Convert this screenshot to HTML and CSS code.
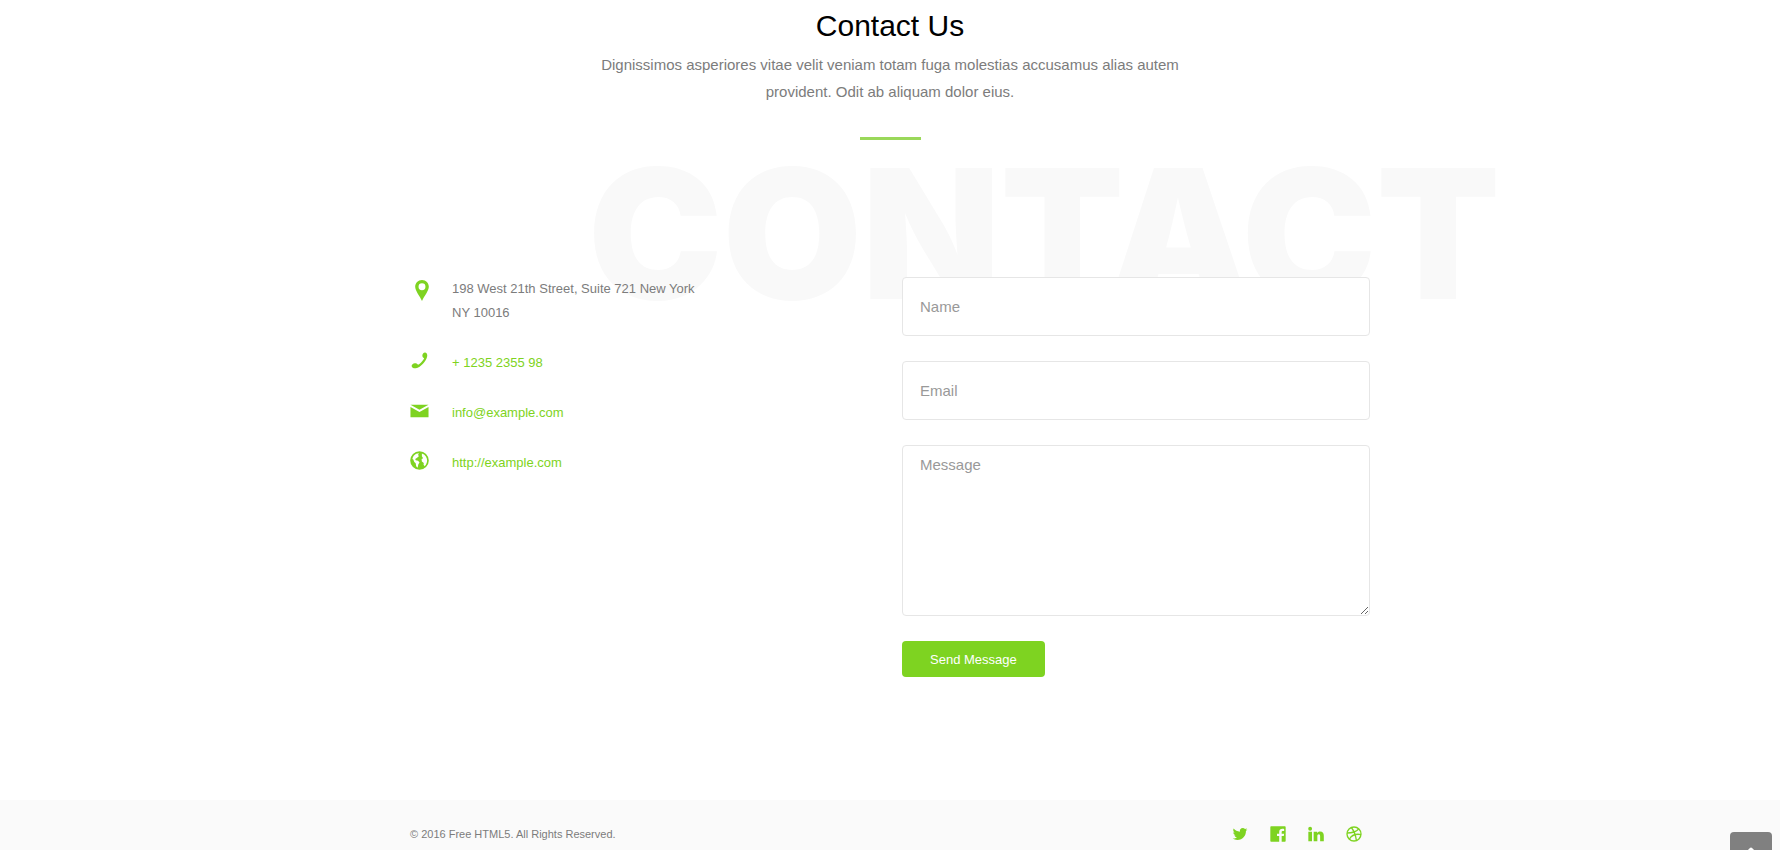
FILE: index.html
```html
<!DOCTYPE html>
<html lang="en">
  <head>
    <meta charset="UTF-8" />
    <meta name="viewport" content="width=device-width, initial-scale=1.0" />
    <title>Contact Us</title>
    <link rel="stylesheet" href="styles.css">
  </head>
  <body>
    <main class="contact">
      <div class="heading">
        <h2>Contact Us</h2>
        <p>Dignissimos asperiores vitae velit veniam totam fuga molestias accusamus alias autem provident. Odit ab aliquam dolor eius.</p>
      </div>

      <div class="container contact-row">
        <span class="watermark" aria-hidden="true">CONTACT</span>

        <ul class="contact-info">
          <li>
            <svg class="icon icon-pin" viewBox="0 0 20 20"><path fill-rule="evenodd" d="M10 0C6.200 0 3.500 2.900 3.500 6.500C3.500 10.500 8 15.500 10 20C12 15.500 16.500 10.500 16.500 6.500C16.500 2.900 13.800 0 10 0zM10 3.200a3.300 3.300 0 1 1 0 6.600a3.300 3.300 0 0 1 0-6.600z"/></svg>
            <span>198 West 21th Street, Suite 721 New York<br>NY 10016</span>
          </li>
          <li>
            <svg class="icon" viewBox="0 0 20 20"><path d="M12.800 10.800C11.300 12.700 9.800 14 8.500 14.600C7.800 13.300 6.500 12.600 5 12.800C3.200 13 1.800 14.200 1.700 15.700C1.900 17.600 4 18.500 6.200 18.200C11.500 17 17 10.500 18 6C18.600 3.600 17.800 1.800 16 1.500C14.200 1.400 13 3 13 4.800C13 6.200 13.800 7.300 14.900 7.600C14.500 8.700 13.700 9.800 12.800 10.800z"/></svg>
            <a href="tel://1235235598">+ 1235 2355 98</a>
          </li>
          <li>
            <svg class="icon" viewBox="0 0 20 20"><path d="M.5 4h19L10 9.200zM.5 6.200l9.500 5.300l9.500-5.300V17H.5z"/></svg>
            <a href="mailto:info@example.com">info@example.com</a>
          </li>
          <li>
            <svg class="icon" viewBox="0 0 20 20"><path fill-rule="evenodd" d="M10 .2a9.800 9.800 0 1 0 0 19.600a9.800 9.800 0 0 0 0-19.600zM6.500 3L9.500 2.300L8.500 4L9.300 5.500L7.500 7.200L5.500 8.500L6 9.800L8.500 10.300L10 12L8.800 14L8 17.500L6.500 16L6 13L4.500 11.500L3.500 9L2.500 8.500C3 6 4.500 4 6.500 3zM12.500 2.500C16 3.500 18 6.500 18 10C18 12 17 14.500 15.500 16L14.300 14.500L14.500 12.500L12.500 11L12.200 8.500L13.800 7.500L12.500 5.500z"/></svg>
            <a href="http://example.com">http://example.com</a>
          </li>
        </ul>

        <form class="contact-form">
          <input type="text" class="form-control" placeholder="Name" aria-label="Name">
          <input type="email" class="form-control" placeholder="Email" aria-label="Email">
          <textarea class="form-control" placeholder="Message" aria-label="Message"></textarea>
          <button type="submit" class="btn">Send Message</button>
        </form>
      </div>
    </main>

    <footer class="footer">
      <div class="container footer-row">
        <small>&copy; 2016 Free HTML5. All Rights Reserved.</small>
        <nav class="social">
          <a href="#" aria-label="Twitter">
            <svg viewBox="0 0 24 24"><path d="M23 5.200c-.8.400-1.700.6-2.600.7c1-.6 1.600-1.400 2-2.500c-.9.500-1.800.9-2.900 1.100a4.500 4.500 0 0 0-7.700 4.100C8 8.400 4.700 6.600 2.500 3.900c-1.200 2-.6 4.700 1.400 6c-.7 0-1.400-.2-2-.6c0 2.200 1.500 4.100 3.600 4.500c-.7.200-1.400.2-2 .1c.6 1.800 2.200 3.100 4.200 3.100c-1.900 1.500-4.300 2.100-6.700 1.900c2 1.300 4.500 2.100 7 2.100c8.500 0 13.200-7.200 12.900-13.500c.8-.6 1.500-1.400 2.100-2.300z"/></svg>
          </a>
          <a href="#" aria-label="Facebook">
            <svg viewBox="0 0 24 24"><path d="M2 .5h20c.8 0 1.500.7 1.500 1.500v20c0 .8-.7 1.500-1.500 1.500h-4.500v-8.500h3.200l.5-3.500h-3.700V9.300c0-1 .4-1.700 1.700-1.700h2V4.400c-.7-.1-1.500-.2-2.600-.2c-3 0-4.800 1.700-4.800 4.900v2.400H10.500V15h3.300v8.500H2C1.200 23.500.5 22.800.5 22V2C.5 1.200 1.200.5 2 .5z"/></svg>
          </a>
          <a href="#" aria-label="LinkedIn">
            <svg viewBox="0 0 24 24"><path d="M.5 8.500H6V23H.5zM3.200 1.200a2.900 2.900 0 1 1 0 5.800a2.900 2.900 0 0 1 0-5.800zM8.500 8.500h5.200v2c.9-1.500 2.300-2.400 4.300-2.400c4.300 0 5.700 2.700 5.700 6.400V23h-5.500v-7.600c0-1.900-.4-3-2-3s-2.200 1.100-2.200 3V23H8.500z"/></svg>
          </a>
          <a href="#" aria-label="Dribbble">
            <svg viewBox="0 0 24 24"><g fill="none" stroke="currentColor" stroke-width="2"><circle cx="12" cy="12" r="10.500"/><path d="M8 2.300c4 5 6.300 11 7.500 18.800M1.500 10.500c7.500 0 13.500-1.500 17.500-6M5 19.800c3.500-6.500 9-8.500 17.500-7"/></g></svg>
          </a>
        </nav>
      </div>
    </footer>

    <a href="#" class="gototop" aria-label="Back to top">
      <svg viewBox="0 0 16 16"><path d="M8 4v10M4 8l4-4l4 4" fill="none" stroke="currentColor" stroke-width="3" stroke-linecap="round" stroke-linejoin="round"/></svg>
    </a>
  </body>
</html>
```
FILE: styles.css
```css
* {
  box-sizing: border-box;
}

body {
  margin: 0;
  min-height: 100vh;
  display: flex;
  flex-direction: column;
  font-family: Arial, "Liberation Sans", sans-serif;
  font-size: 13px;
  line-height: 24px;
  color: #7c7c7c;
  background: #fff;
}

a {
  color: #7ed321;
  text-decoration: none;
}

svg {
  display: block;
  fill: currentColor;
}

.container {
  width: 100%;
  max-width: 960px;
  margin: 0 auto;
}

.contact {
  flex: 1;
  padding-bottom: 122px;
}

.heading {
  max-width: 620px;
  margin: 0 auto 137px;
  padding-top: 6px;
  text-align: center;
}

.heading h2 {
  margin: 0 0 6px;
  font-size: 30px;
  font-weight: 400;
  line-height: 39px;
  color: #000;
}

.heading p {
  margin: 0;
  font-size: 15px;
  line-height: 27px;
}

.heading::after {
  content: "";
  display: block;
  width: 61px;
  height: 3px;
  margin: 32px auto 0;
  background: #9ad85a;
}

.contact-row {
  position: relative;
  display: grid;
  grid-template-columns: 1fr 1fr;
  gap: 24px;
}

/* big word behind the columns */
.watermark {
  position: absolute;
  z-index: -1;
  top: -133px;
  right: -130px;
  font-family: "Arial Black", Inter, sans-serif;
  font-size: 180px;
  font-weight: 900;
  line-height: 180px;
  color: #f9f9f9;
}

.contact-info {
  display: flex;
  flex-direction: column;
  gap: 26px;
  margin: 0;
  padding: 0;
  list-style: none;
}

.contact-info li {
  display: flex;
  gap: 23px;
}

.icon {
  width: 19px;
  height: 19px;
  color: #7ed321;
}

.icon-pin {
  width: 24px;
  height: 21px;
  margin: 3px -5px 0 0;
}

.contact-form {
  display: flex;
  flex-direction: column;
  align-items: flex-start;
  gap: 25px;
}

.form-control {
  display: block;
  width: 100%;
  height: 59px;
  padding: 7px 17px;
  border: 1px solid #e6e6e6;
  border-radius: 4px;
  background: #fff;
  font-family: inherit;
  font-size: 15px;
  line-height: 24px;
  color: #7c7c7c;
}

.form-control::placeholder {
  color: #999;
}

textarea.form-control {
  height: 171px;
  resize: vertical;
}

.btn {
  height: 36px;
  padding: 0 28px;
  border: 0;
  border-radius: 4px;
  background: #7ed321;
  font-family: inherit;
  font-size: 13px;
  color: #fff;
  cursor: pointer;
}

.footer {
  height: 50px;
  padding-top: 22px;
  background: #fafafa;
}

.footer-row {
  display: flex;
  justify-content: space-between;
  align-items: center;
}

.footer small {
  font-size: 11px;
}

.social {
  display: flex;
  gap: 22px;
  padding-right: 8px;
}

.social svg {
  width: 16px;
  height: 16px;
}

.gototop {
  position: fixed;
  right: 8px;
  bottom: -24px;
  width: 42px;
  height: 42px;
  padding: 13px;
  border-radius: 4px 4px 0 0;
  background: #808080;
  color: #fff;
}
```
